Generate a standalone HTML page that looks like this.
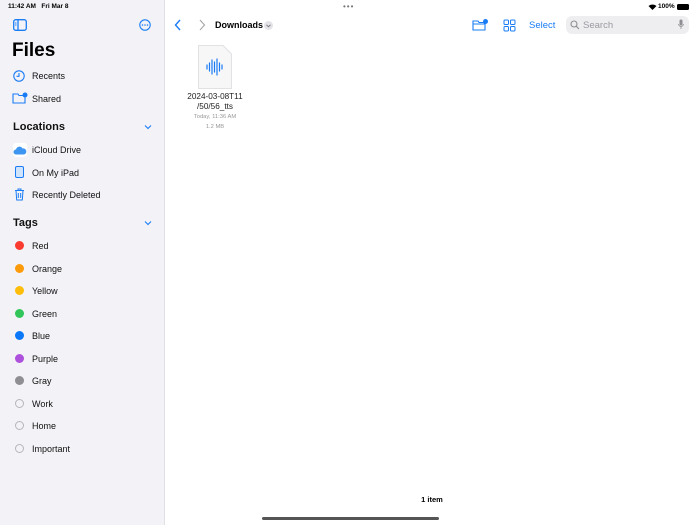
<!DOCTYPE html>
<html><head><meta charset="utf-8"><style>
*{margin:0;padding:0;box-sizing:border-box}
body{width:700px;height:525px;overflow:hidden;font-family:"Liberation Sans",sans-serif;background:#fff;position:relative;color:#000}
.a{position:absolute}
#side{left:0;top:0;width:165px;height:525px;background:#f2f2f7;border-right:1px solid #e0e0e5}
.t{font-size:9px;color:#111}
.dot{width:9px;height:9px;border-radius:50%}
.hd{font-size:11px;font-weight:bold;color:#111}
.blue{color:#1a7cf5}
</style></head><body>
<div id="side" class="a"></div>
<div class="a" style="left:8px;top:3px;font-size:6.5px;font-weight:bold">11:42 AM&nbsp;&nbsp; Fri Mar 8</div>
<svg class="a" style="left:13px;top:19px" width="14" height="12" viewBox="0 0 14 12"><rect x="0.7" y="0.7" width="12.6" height="10.6" rx="2" fill="none" stroke="#1a7cf5" stroke-width="1.3"/><line x1="5" y1="1" x2="5" y2="11" stroke="#1a7cf5" stroke-width="1.3"/><line x1="2" y1="4" x2="3.5" y2="4" stroke="#1a7cf5"/><line x1="2" y1="6" x2="3.5" y2="6" stroke="#1a7cf5"/></svg>
<svg class="a" style="left:139px;top:19px" width="12" height="12" viewBox="0 0 12 12"><circle cx="6" cy="6" r="5.2" fill="none" stroke="#1a7cf5" stroke-width="1.1"/><circle cx="3.5" cy="6" r=".8" fill="#1a7cf5"/><circle cx="6" cy="6" r=".8" fill="#1a7cf5"/><circle cx="8.5" cy="6" r=".8" fill="#1a7cf5"/></svg>
<div class="a" style="left:12px;top:40px;font-size:19px;font-weight:bold">Files</div>
<svg class="a" style="left:13px;top:70px" width="12" height="12" viewBox="0 0 12 12"><circle cx="6" cy="6" r="5.2" fill="none" stroke="#1a7cf5" stroke-width="1.1"/><path d="M6 3V6.3H3.5" fill="none" stroke="#1a7cf5" stroke-width="1.1"/></svg>
<div class="a t" style="left:32px;top:71px">Recents</div>
<svg class="a" style="left:12px;top:92px" width="16" height="12" viewBox="0 0 16 12"><path d="M1 2H6L7 3.5H13V11H1Z" fill="none" stroke="#1a7cf5" stroke-width="1.1"/><circle cx="13" cy="3" r="2.5" fill="#1a7cf5"/></svg>
<div class="a t" style="left:32px;top:94px">Shared</div>
<div class="a hd" style="left:13px;top:121px">Locations</div>
<svg class="a" style="left:144px;top:124px" width="8" height="6"><path d="M1 1.5L4 4.5L7 1.5" fill="none" stroke="#1a7cf5" stroke-width="1.1"/></svg>
<div class="a" style="left:13px;top:143px;width:14px;height:14px;background:#fff;border-radius:3px"></div>
<svg class="a" style="left:13px;top:146px" width="14" height="9" viewBox="0 0 14 9"><path d="M3 8.5A2.5 2.5 0 0 1 3 3.5A3.5 3.5 0 0 1 9.5 2.5A3 3 0 0 1 11 8.5Z" fill="#3d95f2"/></svg>
<div class="a t" style="left:32px;top:145px">iCloud Drive</div>
<div class="a" style="left:15px;top:166px;width:9px;height:12px;border:1.2px solid #1a7cf5;border-radius:2px;background:#cfe3fb"></div>
<div class="a t" style="left:32px;top:168px">On My iPad</div>
<svg class="a" style="left:14px;top:188px" width="11" height="13" viewBox="0 0 11 13"><path d="M1 2.5H10M4 2.5V1H7V2.5M2 2.5L2.7 12H8.3L9 2.5M4.3 5V10M6.7 5V10" fill="none" stroke="#1a7cf5" stroke-width="1"/></svg>
<div class="a t" style="left:32px;top:190px">Recently Deleted</div>
<div class="a hd" style="left:13px;top:217px">Tags</div>
<svg class="a" style="left:144px;top:220px" width="8" height="6"><path d="M1 1.5L4 4.5L7 1.5" fill="none" stroke="#1a7cf5" stroke-width="1.1"/></svg>
<div class="a dot" style="left:15px;top:241px;background:#fa3b30"></div><div class="a t" style="left:32px;top:241px">Red</div>
<div class="a dot" style="left:15px;top:264px;background:#fd9a0a"></div><div class="a t" style="left:32px;top:264px">Orange</div>
<div class="a dot" style="left:15px;top:286px;background:#fdbd0a"></div><div class="a t" style="left:32px;top:286px">Yellow</div>
<div class="a dot" style="left:15px;top:309px;background:#32c65a"></div><div class="a t" style="left:32px;top:309px">Green</div>
<div class="a dot" style="left:15px;top:331px;background:#0b78fa"></div><div class="a t" style="left:32px;top:331px">Blue</div>
<div class="a dot" style="left:15px;top:354px;background:#ad50db"></div><div class="a t" style="left:32px;top:354px">Purple</div>
<div class="a dot" style="left:15px;top:376px;background:#8e8e93"></div><div class="a t" style="left:32px;top:376px">Gray</div>
<div class="a dot" style="left:15px;top:399px;border:1px solid #b5b5ba"></div><div class="a t" style="left:32px;top:399px">Work</div>
<div class="a dot" style="left:15px;top:421px;border:1px solid #b5b5ba"></div><div class="a t" style="left:32px;top:421px">Home</div>
<div class="a dot" style="left:15px;top:444px;border:1px solid #b5b5ba"></div><div class="a t" style="left:32px;top:444px">Important</div>

<div class="a" style="left:343px;top:2px;font-size:8px;color:#777;letter-spacing:1px">•••</div>
<div class="a" style="left:658px;top:3px;font-size:6.5px;font-weight:bold">100%</div>
<svg class="a" style="left:648px;top:4px" width="9" height="6" viewBox="0 0 9 6"><path d="M0.5 2A6 6 0 0 1 8.5 2L4.5 6Z" fill="#000"/></svg>
<div class="a" style="left:677px;top:4px;width:12px;height:6px;background:#000;border-radius:1.5px"></div>
<svg class="a" style="left:174px;top:19px" width="8" height="12"><path d="M6 1L1.5 6L6 11" fill="none" stroke="#1a7cf5" stroke-width="1.4"/></svg>
<svg class="a" style="left:198px;top:19px" width="8" height="12"><path d="M2 1L6.5 6L2 11" fill="none" stroke="#aaa" stroke-width="1.2"/></svg>
<div class="a" style="left:215px;top:20px;font-size:9px;font-weight:bold">Downloads</div>
<div class="a" style="left:264px;top:21px;width:9px;height:9px;border-radius:50%;background:#e3e3e8"></div>
<svg class="a" style="left:266px;top:24px" width="5" height="4"><path d="M.5 .8L2.5 2.8L4.5 .8" fill="none" stroke="#777" stroke-width=".9"/></svg>
<svg class="a" style="left:472px;top:18px" width="17" height="13" viewBox="0 0 17 13"><path d="M1 3H6L7 4.5H13V12H1Z" fill="none" stroke="#1a7cf5" stroke-width="1.1"/><path d="M1 6H13" stroke="#1a7cf5"/><circle cx="13.5" cy="3.5" r="2.5" fill="#1a7cf5"/></svg>
<svg class="a" style="left:503px;top:19px" width="13" height="13" viewBox="0 0 13 13" fill="none" stroke="#1a7cf5" stroke-width="1"><rect x="1" y="1" width="4.5" height="4.5" rx="1"/><rect x="7.5" y="1" width="4.5" height="4.5" rx="1"/><rect x="1" y="7.5" width="4.5" height="4.5" rx="1"/><rect x="7.5" y="7.5" width="4.5" height="4.5" rx="1"/></svg>
<div class="a blue" style="left:529px;top:20px;font-size:9.5px">Select</div>
<div class="a" style="left:566px;top:16px;width:123px;height:18px;background:#eeeef0;border-radius:6px"></div>
<svg class="a" style="left:570px;top:20px" width="10" height="10"><circle cx="4" cy="4" r="3" fill="none" stroke="#8e8e93" stroke-width="1.1"/><path d="M6.2 6.2L9 9" stroke="#8e8e93" stroke-width="1.1"/></svg>
<div class="a" style="left:583px;top:20px;font-size:9.5px;color:#9a9aa0">Search</div>
<svg class="a" style="left:678px;top:19px" width="6" height="11"><rect x="1.5" y="0.5" width="3" height="6" rx="1.5" fill="#8e8e93"/><path d="M.6 5A2.4 2.4 0 0 0 5.4 5M3 7.5V10" fill="none" stroke="#8e8e93" stroke-width=".8"/></svg>

<svg class="a" style="left:198px;top:45px" width="34" height="44" viewBox="0 0 34 44"><path d="M.5 .5H25L33.5 9V43.5H.5Z" fill="#f7f7f8" stroke="#e2e2e5"/><g stroke="#1a7cf5" stroke-width="1.2" stroke-linecap="round"><path d="M9 20V24M11.5 18V26M14 15V29M16.5 17V27M19 14V30M21.5 18V26M24 20V24"/></g></svg>
<div class="a" style="left:180px;top:92px;width:70px;text-align:center;font-size:8.2px;line-height:10px;color:#222">2024-03-08T11<br>/50/56_tts</div>
<div class="a" style="left:180px;top:113px;width:70px;text-align:center;font-size:5.8px;line-height:9.5px;color:#999">Today, 11:36 AM<br>1.2 MB</div>
<div class="a" style="left:380px;top:495px;width:104px;text-align:center;font-size:7.5px;font-weight:bold">1 item</div>
<div class="a" style="left:262px;top:517px;width:177px;height:3px;border-radius:2px;background:#555"></div>
</body></html>
